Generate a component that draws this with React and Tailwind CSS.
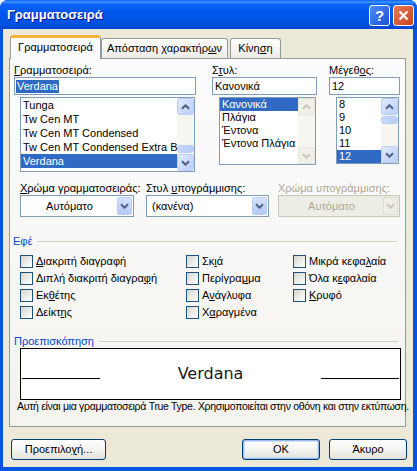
import React from "react";

function Chevron({ dir = "down", color = "#4d6185" }) {
  return (
    <svg width="9" height="6" viewBox="0 0 9 6">
      <path
        d={dir === "down" ? "M1 1.2l3.5 3.5 3.5-3.5" : "M1 4.8l3.5-3.5 3.5 3.5"}
        stroke={color}
        strokeWidth="2"
        fill="none"
      />
    </svg>
  );
}

function ArrowBox({ dir, disabled }) {
  return (
    <div
      className={
        disabled
          ? "h-[17px] w-full shrink-0 flex items-center justify-center rounded-[2px] border border-[#e8e6dc] bg-[#f0efe8]"
          : "h-[17px] w-full shrink-0 flex items-center justify-center rounded-[3px] border border-[#b9cdf5] bg-linear-to-br from-[#e2ebfe] to-[#b9cefa]"
      }
    >
      <Chevron dir={dir} color={disabled ? "#c9c7ba" : "#4d6185"} />
    </div>
  );
}

function ScrollBar({ thumbAt, disabled }) {
  return (
    <div className="w-[17px] shrink-0 flex flex-col bg-[#f6f5f0]">
      <ArrowBox dir="up" disabled={disabled} />
      <div
        className={
          "flex-1 flex flex-col py-[1px] " +
          (thumbAt === "bottom" ? "justify-end" : "justify-start")
        }
      >
        {thumbAt && (
          <div className="h-[8px] rounded-[3px] border border-[#b9cdf5] bg-linear-to-r from-[#cbdafd] to-[#b6cbf8]" />
        )}
      </div>
      <ArrowBox dir="down" disabled={disabled} />
    </div>
  );
}

function ListBox({ items, selected, rowClass, className, thumbAt, disabled }) {
  return (
    <div className={"flex border border-[#7f9db9] bg-white " + className}>
      <div className="flex-1 flex flex-col overflow-hidden">
        {items.map((it) => (
          <div
            key={it}
            className={
              rowClass +
              " flex items-center pl-[2px] whitespace-nowrap overflow-hidden " +
              (it === selected ? "bg-[#316ac5] text-white" : "")
            }
          >
            {it}
          </div>
        ))}
      </div>
      <ScrollBar thumbAt={thumbAt} disabled={disabled} />
    </div>
  );
}

function Combo({ value, center, disabled, className }) {
  return (
    <div
      className={
        "h-[22px] flex p-[1px] border " +
        (disabled ? "border-[#c9c7ba] bg-[#eeede5] text-[#aca899] " : "border-[#7f9db9] bg-white ") +
        className
      }
    >
      <div className={"flex-1 flex items-center " + (center ? "justify-center" : "pl-[4px]")}>
        {value}
      </div>
      <div
        className={
          "w-[15px] flex items-center justify-center rounded-[2px] border " +
          (disabled
            ? "border-[#e0ded3] bg-[#eeede5]"
            : "border-[#bccff7] bg-linear-to-b from-[#d6e2fd] to-[#b3c9f7]")
        }
      >
        <Chevron color={disabled ? "#c9c7ba" : "#4d6185"} />
      </div>
    </div>
  );
}

function Check({ children }) {
  return (
    <div className="h-[17px] flex items-center">
      <span className="w-[13px] h-[13px] shrink-0 border border-[#1c5180] bg-linear-to-br from-[#d6d6cf] to-white" />
      <span className="ml-[3px] whitespace-nowrap">{children}</span>
    </div>
  );
}

function Button({ children, className, isDefault }) {
  return (
    <div
      className={
        "h-[21px] flex items-center justify-center rounded-[3px] border border-[#003c74] bg-linear-to-b from-white via-[#f4f4f0] to-[#e3e2da] " +
        (isDefault ? "shadow-[inset_0_0_0_1px_#98b8ea,inset_0_0_0_2px_#cee0fb] " : "") +
        className
      }
    >
      {children}
    </div>
  );
}

function GroupTitle({ children, className }) {
  return (
    <div className={"h-[13px] flex items-center " + className}>
      <span className="text-[#0046d5] whitespace-nowrap">{children}</span>
      <div className="flex-1 h-px bg-[#d0d0bf] ml-[5px]" />
    </div>
  );
}

export default function App() {
  return (
    <div className="w-[417px] h-[471px] flex flex-col bg-[#0553e1] rounded-t-[8px] overflow-hidden font-['Liberation_Sans','DejaVu_Sans',sans-serif] text-[11px] text-black leading-[13px]">
      {/* title bar */}
      <div className="h-[29px] shrink-0 flex items-center pl-[7px] pr-[3px] bg-[linear-gradient(to_bottom,#0a5ef8_0%,#3d95ff_7%,#0b63f6_15%,#0058ee_40%,#0054e3_70%,#0050dc_88%,#0342d0_100%)]">
        <span className="text-white font-bold text-[13px] [text-shadow:1px_1px_#0a1883]">
          Γραμματοσειρά
        </span>
        <div className="ml-auto flex gap-[3px] mt-[1px]">
          <div className="w-[21px] h-[21px] rounded-[3px] border border-white bg-linear-to-br from-[#4f8cf8] to-[#1d4fd6] flex items-center justify-center text-white font-bold text-[15px]">
            ?
          </div>
          <div className="w-[21px] h-[21px] rounded-[3px] border border-white bg-linear-to-br from-[#ec7a56] to-[#c6401a] flex items-center justify-center">
            <svg width="11" height="11" viewBox="0 0 11 11">
              <path d="M1.5 1.5l8 8M9.5 1.5l-8 8" stroke="white" strokeWidth="2.2" />
            </svg>
          </div>
        </div>
      </div>

      {/* body */}
      <div className="flex-1 ml-[3px] mr-[4px] mb-[4px] bg-[#ece9d8] flex flex-col">
        {/* tabs */}
        <div className="pt-[6px] pl-[7px] flex items-end">
          <div className="relative z-10 w-[91px] h-[24px] -mb-px flex items-center justify-center border-x border-[#919b9c] bg-[#fcfcfe] border-t-[3px] border-t-[#f5b43c] rounded-t-[3px]">
            <span className="mb-[3px]">Γραμματοσειρά</span>
          </div>
          <div className="w-[127px] h-[20px] flex items-center justify-center border border-b-0 border-[#919b9c] rounded-t-[3px] bg-linear-to-b from-white to-[#ecebe6]">
            Απόσταση χαρακτήρ<u>ω</u>ν
          </div>
          <div className="ml-[2px] w-[51px] h-[20px] flex items-center justify-center border border-b-0 border-[#919b9c] rounded-t-[3px] bg-linear-to-b from-white to-[#ecebe6]">
            Κίνη<u>σ</u>η
          </div>
        </div>

        {/* panel */}
        <div className="ml-[6px] mr-[7px] h-[369px] border border-[#919b9c] bg-linear-to-b from-[#fcfcfe] to-[#f4f3ee] flex flex-col">
          {/* row 1 */}
          <div className="pt-[5px] flex">
            <div className="ml-[4px] w-[182px] flex flex-col">
              <div className="h-[13px]">
                <u>Γ</u>ραμματοσειρά:
              </div>
              <div className="h-[18px] border border-[#7f9db9] bg-white flex items-center pl-[1px]">
                <span className="bg-[#316ac5] text-white px-[1px]">Verdana</span>
              </div>
              <ListBox
                className="mt-[2px] ml-[6px] w-[175px] h-[75px]"
                rowClass="h-[14px] shrink-0"
                items={["Tunga", "Tw Cen MT", "Tw Cen MT Condensed", "Tw Cen MT Condensed Extra Bo", "Verdana"]}
                selected="Verdana"
                thumbAt="bottom"
              />
            </div>

            <div className="ml-[16px] w-[105px] flex flex-col">
              <div className="h-[13px]">
                Σ<u>τ</u>υλ:
              </div>
              <div className="h-[18px] border border-[#7f9db9] bg-white flex items-center pl-[2px]">
                Κανονικά
              </div>
              <ListBox
                className="mt-[2px] ml-[7px] w-[97px] h-[68px]"
                rowClass="h-[13px] shrink-0"
                items={["Κανονικά", "Πλάγια", "Έντονα", "Έντονα Πλάγια"]}
                selected="Κανονικά"
                disabled
              />
            </div>

            <div className="ml-[12px] w-[71px] flex flex-col">
              <div className="h-[13px]">
                Μέγεθ<u>ο</u>ς:
              </div>
              <div className="h-[18px] border border-[#7f9db9] bg-white flex items-center pl-[2px]">
                12
              </div>
              <ListBox
                className="mt-[2px] ml-[7px] w-[63px] h-[67px]"
                rowClass="h-[13px] shrink-0"
                items={["8", "9", "10", "11", "12"]}
                selected="12"
                thumbAt="top"
              />
            </div>
          </div>

          {/* row 2 */}
          <div className="mt-[10px] ml-[10px] flex">
            <div className="w-[114px] flex flex-col">
              <div className="h-[13px] whitespace-nowrap">
                <u>Χ</u>ρώμα γραμματοσειράς:
              </div>
              <Combo value="Αυτόματο" center />
            </div>
            <div className="ml-[12px] w-[123px] flex flex-col">
              <div className="h-[13px] whitespace-nowrap">
                Στυλ <u>υ</u>πογράμμισης:
              </div>
              <Combo value="(κανένα)" />
            </div>
            <div className="ml-[9px] w-[122px] flex flex-col">
              <div className="h-[13px] whitespace-nowrap text-[#aca899]">Χρώμα υπογράμμισης:</div>
              <Combo value="Αυτόματο" center disabled />
            </div>
          </div>

          {/* effects */}
          <GroupTitle className="mt-[18px] ml-[3px] mr-[8px]">Εφέ</GroupTitle>
          <div className="mt-[5px] ml-[10px] flex">
            <div className="w-[166px] flex flex-col">
              <Check>
                <u>Δ</u>ιακριτή διαγραφή
              </Check>
              <Check>
                Διπλή διακριτή διαγρα<u>φ</u>ή
              </Check>
              <Check>
                Εκ<u>θ</u>έτης
              </Check>
              <Check>
                Δείκτ<u>η</u>ς
              </Check>
            </div>
            <div className="w-[107px] flex flex-col">
              <Check>
                Σκ<u>ι</u>ά
              </Check>
              <Check>
                Περίγρα<u>μ</u>μα
              </Check>
              <Check>
                Α<u>ν</u>άγλυφα
              </Check>
              <Check>
                Χ<u>α</u>ραγμένα
              </Check>
            </div>
            <div className="flex flex-col">
              <Check>
                Μικρά κεφα<u>λ</u>αία
              </Check>
              <Check>
                Όλα κ<u>ε</u>φαλαία
              </Check>
              <Check>
                <u>Κ</u>ρυφό
              </Check>
            </div>
          </div>

          {/* preview */}
          <GroupTitle className="mt-[14px] ml-[4px] mr-[7px]">Προεπισκόπηση</GroupTitle>
          <div className="ml-[10px] w-[381px] h-[52px] border border-black bg-white flex items-center">
            <div className="ml-[1px] w-[78px] h-px bg-black mt-[9px]" />
            <div className="flex-1 text-center font-['DejaVu_Sans',sans-serif] text-[16px] leading-[20px] text-[#1a1a1a]">
              Verdana
            </div>
            <div className="mr-[1px] w-[78px] h-px bg-black mt-[9px]" />
          </div>
          <div className="ml-[7px] h-[13px] whitespace-nowrap text-[10.5px] tracking-[-0.3px]">
            Αυτή είναι μια γραμματοσειρά True Type. Χρησιμοποιείται στην οθόνη και στην εκτύπωση.
          </div>
        </div>

        {/* buttons */}
        <div className="mt-[12px] flex">
          <Button className="ml-[8px] w-[95px]">
            Προεπιλο<u>γ</u>ή...
          </Button>
          <Button className="ml-auto w-[78px]" isDefault>
            OK
          </Button>
          <Button className="ml-[9px] mr-[6px] w-[78px]">Άκυρο</Button>
        </div>
      </div>
    </div>
  );
}
